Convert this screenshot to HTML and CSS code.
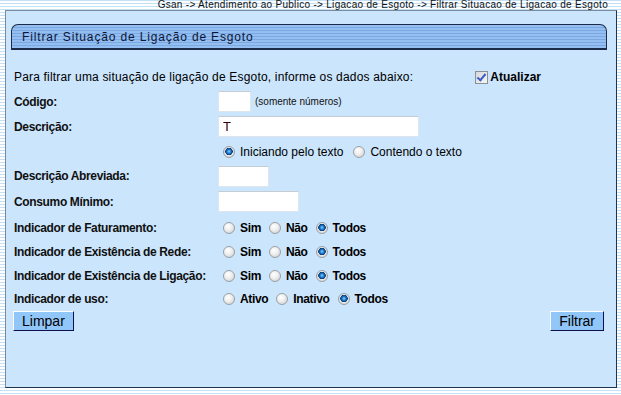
FILE: index.html
```html
<!DOCTYPE html>
<html lang="pt-BR">

<head>
    <meta charset="UTF-8">
    <meta name="viewport" content="width=device-width, initial-scale=1.0">
    <link rel="stylesheet" href="styles.css">

    <title>Filtrar Situação de Ligação de Esgoto</title>
</head>

<body>

    <div class="crumbs">Gsan -&gt; Atendimento ao Publico -&gt; Ligacao de Esgoto -&gt; Filtrar Situacao de Ligacao de Esgoto</div>

    <div class="panel">
        <div class="title-bar">Filtrar Situação de Ligação de Esgoto</div>

        <form id="filtroForm">
            <div class="intro">
                <span class="intro-text">Para filtrar uma situação de ligação de Esgoto, informe os dados abaixo:</span>
                <label class="update"><input type="checkbox" class="check" checked> Atualizar</label>
            </div>

            <div class="row r-codigo">
                <label class="label-group" for="codigo">Código:</label>
                <div class="field">
                    <input class="input-group w-codigo" type="text" id="codigo">
                    <span class="hint">(somente números)</span>
                </div>
            </div>

            <div class="row r-desc">
                <label class="label-group" for="descricao">Descrição:</label>
                <div class="field">
                    <input class="input-group w-desc" type="text" id="descricao" value="T">
                </div>
            </div>

            <div class="row r-tipo">
                <span></span>
                <div class="field opts wide">
                    <label class="opt"><input type="radio" class="radio" name="tipo" checked> Iniciando pelo texto</label>
                    <label class="opt"><input type="radio" class="radio" name="tipo"> Contendo o texto</label>
                </div>
            </div>

            <div class="row r-abrev">
                <label class="label-group" for="abrev">Descrição Abreviada:</label>
                <div class="field">
                    <input class="input-group w-abrev" type="text" id="abrev">
                </div>
            </div>

            <div class="row r-consumo">
                <label class="label-group" for="consumo">Consumo Mínimo:</label>
                <div class="field">
                    <input class="input-group w-consumo" type="text" id="consumo">
                </div>
            </div>

            <div class="row r-fat">
                <span class="label-group">Indicador de Faturamento:</span>
                <div class="field opts bold">
                    <label class="opt"><input type="radio" class="radio" name="fat"> Sim</label>
                    <label class="opt"><input type="radio" class="radio" name="fat"> Não</label>
                    <label class="opt"><input type="radio" class="radio" name="fat" checked> Todos</label>
                </div>
            </div>

            <div class="row r-rede">
                <span class="label-group">Indicador de Existência de Rede:</span>
                <div class="field opts bold">
                    <label class="opt"><input type="radio" class="radio" name="rede"> Sim</label>
                    <label class="opt"><input type="radio" class="radio" name="rede"> Não</label>
                    <label class="opt"><input type="radio" class="radio" name="rede" checked> Todos</label>
                </div>
            </div>

            <div class="row r-lig">
                <span class="label-group">Indicador de Existência de Ligação:</span>
                <div class="field opts bold">
                    <label class="opt"><input type="radio" class="radio" name="lig"> Sim</label>
                    <label class="opt"><input type="radio" class="radio" name="lig"> Não</label>
                    <label class="opt"><input type="radio" class="radio" name="lig" checked> Todos</label>
                </div>
            </div>

            <div class="row r-uso">
                <span class="label-group">Indicador de uso:</span>
                <div class="field opts bold">
                    <label class="opt"><input type="radio" class="radio" name="uso"> Ativo</label>
                    <label class="opt"><input type="radio" class="radio" name="uso"> Inativo</label>
                    <label class="opt"><input type="radio" class="radio" name="uso" checked> Todos</label>
                </div>
            </div>

            <div class="button-container">
                <button type="button" class="use-button">Limpar</button>
                <button type="button" class="use-button">Filtrar</button>
            </div>
        </form>
    </div>

</body>

</html>
```

FILE: styles.css
```css
body {
    margin: 0;
    height: 395px;
    overflow: hidden;
    font-family: "Liberation Sans", Arial, sans-serif;
    background: repeating-linear-gradient(to bottom, #c4e0f6 0, #c4e0f6 1px, #ffffff 1px, #ffffff 3px);
}

.crumbs {
    height: 10px;
    padding-right: 13px;
    font-size: 10px;
    line-height: 10px;
    letter-spacing: 0.3px;
    text-align: right;
    color: #111;
}

.panel {
    box-sizing: border-box;
    margin-left: 5px;
    width: 612px;
    height: 378px;
    padding: 13px 9px 0 5px;
    background-color: #cbe5fc;
    border-top: 1px solid #7a8a9a;
    border-left: 1px solid #7a8a9a;
    border-right: 1px solid #22344c;
    border-bottom: 1px solid #22344c;
}

.title-bar {
    height: 23px;
    padding-left: 10px;
    font-size: 12px;
    line-height: 24px;
    letter-spacing: 0.85px;
    color: #0c1638;
    border: 1px solid #1c2c48;
    border-bottom-width: 2px;
    border-radius: 7px 7px 0 0;
    background: repeating-linear-gradient(to bottom, #94bff0 0, #94bff0 2px, #79a8e3 2px, #79a8e3 3px);
}

form {
    padding: 0 3px 0 3px;
}

.intro {
    display: flex;
    justify-content: space-between;
    align-items: center;
    height: 28px;
    margin-top: 13px;
    font-size: 12px;
    color: #000;
}

.intro-text {
    letter-spacing: 0.18px;
}

.update {
    display: flex;
    align-items: center;
    gap: 2px;
    margin-right: 63px;
    font-weight: bold;
}

.row {
    display: grid;
    grid-template-columns: 204px 1fr;
    align-items: center;
    white-space: nowrap;
}

.r-codigo { height: 25px; margin-top: -2px; }
.r-desc { height: 25px; }
.r-tipo { height: 25px; }
.r-abrev { height: 24px; }
.r-consumo { height: 27px; }
.r-fat { height: 25px; }
.r-rede { height: 24px; }
.r-lig { height: 23px; }
.r-uso { height: 24px; }

.label-group {
    font-size: 12px;
    font-weight: bold;
    letter-spacing: -0.35px;
    color: #101010;
}

.field {
    display: flex;
    align-items: center;
    gap: 4px;
}

.input-group {
    box-sizing: border-box;
    height: 21px;
    padding: 1px 4px;
    border: 1px solid #dde6ee;
    border-top-color: #c4ccd4;
    background-color: #fff;
    font-family: "Liberation Sans", Arial, sans-serif;
    font-size: 13px;
    color: #300;
    outline: none;
}

.w-codigo { width: 33px; }
.w-desc { width: 201px; }
.w-abrev { width: 51px; }
.w-consumo { width: 81px; }

.hint {
    font-size: 10px;
    color: #111;
}

.opts {
    gap: 8px;
    padding-left: 5px;
}

.opts.wide {
    gap: 10px;
}

.opt {
    display: flex;
    align-items: center;
    gap: 5px;
    font-size: 12px;
    color: #000;
}

.bold .opt {
    font-weight: bold;
    letter-spacing: -0.35px;
}

.radio {
    appearance: none;
    -webkit-appearance: none;
    box-sizing: border-box;
    width: 12px;
    height: 12px;
    margin: 0;
    border: 1px solid #9aa0a6;
    border-radius: 50%;
    background: radial-gradient(circle at 40% 35%, #ffffff 0, #f0f0f0 40%, #c8c8c8 100%);
}

.radio:checked {
    background: radial-gradient(circle at 50% 45%, #8fd0ff 0, #1a78c8 2px, #0a3a78 3.5px, #e8e8e8 4px, #c8c8c8 100%);
}

.check {
    appearance: none;
    -webkit-appearance: none;
    box-sizing: border-box;
    width: 13px;
    height: 13px;
    margin: 0;
    border: 1px solid #8a9098;
    background: linear-gradient(to bottom right, #d8d8d8, #f6f6f6);
    position: relative;
}

.check:checked::after {
    content: "";
    position: absolute;
    left: 3px;
    top: 0px;
    width: 3px;
    height: 7px;
    border: solid #3a5cc8;
    border-width: 0 2px 2px 0;
    transform: rotate(40deg);
}

.button-container {
    display: flex;
    justify-content: space-between;
    margin: 0 0 0 -1px;
}

.use-button {
    height: 20px;
    padding: 0 8px;
    font-family: "Liberation Sans", Arial, sans-serif;
    font-size: 14px;
    line-height: 16px;
    color: #000;
    background-color: #90c6f8;
    border: 1px solid;
    border-color: #ffffff #101050 #101050 #ffffff;
    cursor: pointer;
}
```
